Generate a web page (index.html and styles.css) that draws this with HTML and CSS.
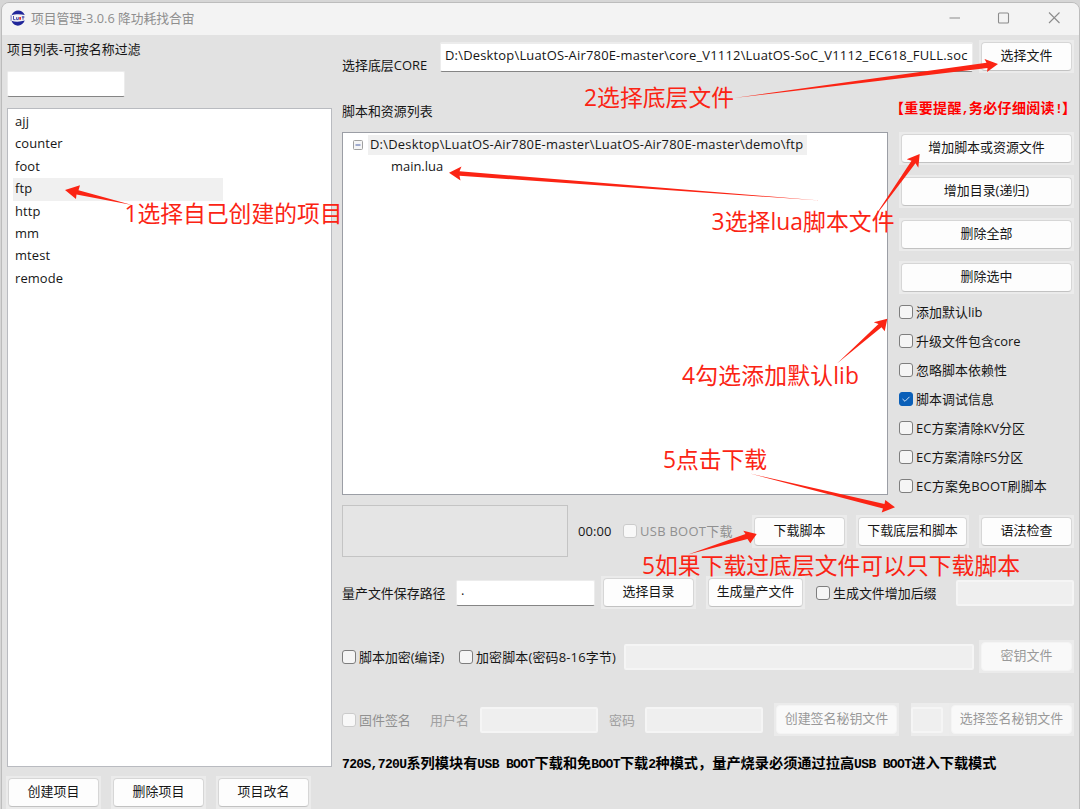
FILE: index.html
```html
<!DOCTYPE html>
<html lang="zh-CN">
<head>
<meta charset="utf-8">
<title>项目管理</title>
<link rel="stylesheet" href="styles.css">
</head>
<body>
<div class="window">
  <header class="titlebar">
    <svg class="logo" width="16" height="16" viewBox="0 0 16 16">
      <path d="M1.500 5.200C4 -1 12 -1 14.800 5C10 4 5 4.200 1.500 5.200Z" fill="#20269a"/>
      <path d="M1.500 10.800C4 17.400 12 17.200 14.800 10.600C10 12 5 12 1.500 10.800Z" fill="#20269a"/>
      <path d="M0.500 5L1.800 5.500V10.500L0.500 11Z" fill="#8d91cc"/>
      <path d="M3.500 6V9.600H5.500M6.600 7.200V9.600H8.300V7.200M13 6V9.700M11.800 7H14.500" fill="none" stroke="#20269a" stroke-width=".8"/>
      <path d="M9.200 7h1.800v2.700h-1.800z" fill="#e8322c"/>
    </svg>
    <span class="title">项目管理-3.0.6 降功耗找合宙</span>
    <svg class="controls" width="112" height="14" viewBox="0 0 112 14" fill="none" stroke="#8c8c8c" stroke-width="1.100">
      <path d="M.5 7H11"/>
      <rect x="49.500" y="2" width="10" height="10" rx="1"/>
      <path d="M100 1.500L110.500 12M110.500 1.500L100 12"/>
    </svg>
  </header>
  <div class="content">
    <aside class="projects">
      <div class="label filter-label">项目列表-可按名称过滤</div>
      <div class="field filter"></div>
      <ul class="list">
        <li>ajj</li><li>counter</li><li>foot</li><li class="selected">ftp</li>
        <li>http</li><li>mm</li><li>mtest</li><li>remode</li>
      </ul>
      <div class="project-actions">
        <button class="btn"><span>创建项目</span></button>
        <button class="btn"><span>删除项目</span></button>
        <button class="btn"><span>项目改名</span></button>
      </div>
    </aside>
    <main class="main">
      <div class="row core-row">
        <span class="label core-label">选择底层CORE</span>
        <div class="field core-path"><span class="path">D:\Desktop\LuatOS-Air780E-master\core_V1112\LuatOS-SoC_V1112_EC618_FULL.soc</span></div>
        <button class="btn end"><span>选择文件</span></button>
      </div>
      <div class="row heading-row">
        <span class="label">脚本和资源列表</span>
        <span class="warning">【重要提醒<i>,</i>务必仔细阅读<i>!</i>】</span>
      </div>
      <div class="resources">
        <div class="tree">
          <div class="node"><svg width="10" height="10" viewBox="0 0 10 10"><rect x=".5" y=".5" width="9" height="9" rx="1" fill="#f5f5f5" stroke="#a0a0a0"/><path d="M2.500 5h5" stroke="#4a60a8"/></svg><span class="root-name">D:\Desktop\LuatOS-Air780E-master\LuatOS-Air780E-master\demo\ftp</span></div>
          <div class="leaf">main.lua</div>
        </div>
        <div class="side">
          <button class="btn wide"><span>增加脚本或资源文件</span></button>
          <button class="btn wide"><span>增加目录(递归)</span></button>
          <button class="btn wide"><span>删除全部</span></button>
          <button class="btn wide"><span>删除选中</span></button>
          <div class="options">
            <label class="check"><i class="box"></i>添加默认lib</label>
            <label class="check"><i class="box"></i>升级文件包含core</label>
            <label class="check"><i class="box"></i>忽略脚本依赖性</label>
            <label class="check"><i class="box on"><svg width="12" height="12" viewBox="0 0 12 12"><path d="M2.500 6L5 8.300L9.500 3.800" fill="none" stroke="#cfe2f5"/></svg></i>脚本调试信息</label>
            <label class="check"><i class="box"></i>EC方案清除KV分区</label>
            <label class="check"><i class="box"></i>EC方案清除FS分区</label>
            <label class="check boot-free"><i class="box"></i>EC方案免BOOT刷脚本</label>
          </div>
        </div>
      </div>
      <div class="row download-row">
        <div class="progress"></div>
        <span class="timer">00:00</span>
        <label class="check disabled usb"><i class="box"></i>USB BOOT下载</label>
        <button class="btn dl-script"><span>下载脚本</span></button>
        <button class="btn dl-all"><span>下载底层和脚本</span></button>
        <button class="btn end"><span>语法检查</span></button>
      </div>
      <div class="row output-row">
        <span class="label output-label">量产文件保存路径</span>
        <div class="field output-path">.</div>
        <button class="btn pick-dir"><span>选择目录</span></button>
        <button class="btn generate"><span>生成量产文件</span></button>
        <label class="check suffix"><i class="box"></i>生成文件增加后缀</label>
        <div class="field off end suffix-field"></div>
      </div>
      <div class="row encrypt-row">
        <label class="check compile"><i class="box"></i>脚本加密(编译)</label>
        <label class="check password"><i class="box"></i>加密脚本(密码8-16字节)</label>
        <div class="field off password-field"></div>
        <button class="btn off end"><span>密钥文件</span></button>
      </div>
      <div class="row sign-row">
        <label class="check disabled sign"><i class="box"></i>固件签名</label>
        <span class="label muted user-label">用户名</span>
        <div class="field off cred"></div>
        <span class="label muted pass-label">密码</span>
        <div class="field off cred"></div>
        <button class="btn off create-key"><span>创建签名秘钥文件</span></button>
        <div class="key-group end">
          <div class="field off key-field"></div>
          <button class="btn off pick-key"><span>选择签名秘钥文件</span></button>
        </div>
      </div>
      <p class="note"><i>720S,720U</i>系列模块有<i>USB BOOT</i>下载和免<i>BOOT</i>下载<i>2</i>种模式，量产烧录必须通过拉高<i>USB BOOT</i>进入下载模式</p>
    </main>
  </div>
</div>
<svg class="annotations" width="1080" height="809" viewBox="0 0 1080 809">
  <path d="M65 190L80 185.200L78.500 190.300L132 205L76.500 194.500L76 199Z"/>
  <path d="M998 64L984.500 59L986.500 62.700L734 98L987.500 68L987 72Z"/>
  <path d="M449 172.700L461.500 166.500L459.500 171.300L820 200.500L459.500 175.800L460.500 180.500Z"/>
  <path d="M919.700 154L906.700 159.300L911.500 160.800L872 220.500L915.500 163.300L918.300 167.700Z"/>
  <path d="M887.300 318.700L873.700 322.300L878.500 324L837 363.500L881.500 327.300L884.700 331.300Z"/>
  <path d="M895 507.300L885.300 500L884.500 504L750 473.500L883 508.500L881.700 512.500Z"/>
  <path d="M756.700 534L743.300 530.700L745.500 534L688 554.500L747.500 539L750.300 543.300Z"/>
  <text x="124.500" y="221.500" textLength="218">1选择自己创建的项目</text>
  <text x="584" y="105.500" textLength="150">2选择底层文件</text>
  <text x="711.500" y="229.500" textLength="183">3选择lua脚本文件</text>
  <text x="682" y="383.500" textLength="177">4勾选添加默认lib</text>
  <text x="663" y="467.500" textLength="104">5点击下载</text>
  <text x="642" y="573.500" textLength="378">5如果下载过底层文件可以只下载脚本</text>
</svg>
</body>
</html>
```
FILE: styles.css
```css
* { box-sizing: border-box; }
body {
  margin: 0;
  width: 1080px;
  height: 809px;
  overflow: hidden;
  background: #d6d6d6;
  color: #161616;
  font: 12.95px/18px "Open Sans", "Noto Sans CJK SC", sans-serif;
  white-space: nowrap;
}
i { font-style: normal; }
.window {
  margin: 2px 0 0 1px;
  width: 1079px;
  height: 820px;
  border: 1px solid #bcbcbc;
  border-radius: 8px 8px 0 0;
  background: #e2e2e2;
  overflow: hidden;
}
.titlebar {
  display: flex;
  align-items: center;
  height: 32px;
  padding: 0 18px 2px 8px;
  background: #f3f3f3;
  color: #8e8e8e;
}
.title { margin-left: 5px; font-size: 12.75px; }
.controls { margin-left: auto; }
.content { display: flex; padding-left: 5px; }
.projects { width: 325px; padding-top: 5px; }
.label { display: block; }
.filter-label { height: 31px; }
.field {
  height: 26px;
  border: 1px solid #ececec;
  border-bottom: 1px solid #858585;
  border-radius: 2px;
  background: #fff;
}
.field.off { background: #efefef; border: 2px solid #f5f5f5; }
.filter { width: 118px; }
.list {
  list-style: none;
  margin: 11px 0 0;
  padding: 2px 5px;
  height: 659px;
  border: 1px solid #b9bbc0;
  background: #fff;
}
.list li { width: 210px; height: 22.4px; padding-left: 2px; line-height: 20px; letter-spacing: .1px; }
.selected { background: #f0f0f0; }
.project-actions { display: flex; gap: 10px; margin-top: 9px; margin-left: -1px; }
.btn {
  flex: none;
  display: block;
  width: 95px;
  height: 33px;
  padding: 2px;
  border: 0;
  background: #ebebeb;
  font: inherit;
  color: inherit;
}
.btn span {
  display: block;
  height: 29px;
  line-height: 25px;
  border: 1px solid #d6d6d6;
  border-bottom-color: #c2c2c2;
  border-radius: 4px;
  background: #fdfdfd;
}
.btn.off span { color: #999; background: #f9f9f9; border-color: #f4f4f4; }
.main { width: 732px; margin-left: 10px; padding-top: 5px; }
.row { display: flex; align-items: center; }
.end { margin-left: auto; }
.core-row { height: 33px; }
.core-label { width: 98px; padding-top: 17px; }
.core-path { width: 533px; height: 30px; padding: 2px 4px; border-width: 2px 1px 1px; letter-spacing: .2px; }
.heading-row { margin-top: 27px; height: 20px; justify-content: space-between; padding-top: 2px; }
.warning, .note {
  font-family: "Noto Sans CJK SC", sans-serif;
  font-weight: 700;
}
.warning { font-size: 14px; color: #f00; width: 184px; margin-top: -5px; letter-spacing: .35px; }
.warning i, .note i { font-family: "Liberation Mono", monospace; font-size: 13px; letter-spacing: -0.7px; }
.resources { display: flex; margin-top: 12px; height: 363px; }
.tree { width: 546px; border: 1px solid #9b9ea5; background: #fff; padding: 2px 10px; }
.node { display: flex; align-items: center; height: 20px; }
.root-name { margin-left: 5px; height: 20px; line-height: 18px; width: 439px; padding-left: 2px; background: #f0f0f0; letter-spacing: .22px; }
.leaf { padding-left: 38px; height: 22px; line-height: 22px; }
.side { width: 186px; padding-left: 11px; }
.wide { width: 175px; margin-bottom: 10px; }
.options { margin-top: -6px; }
.options .check { height: 28.9px; letter-spacing: .05px; }
.options .boot-free { letter-spacing: .2px; }
.check { display: flex; align-items: center; }
.box {
  flex: none;
  display: block;
  width: 14px;
  height: 14px;
  margin-right: 3px;
  border: 1px solid #7e7e7e;
  border-radius: 3px;
  background: #f5f5f5;
}
.box.on { background: #0a5fb8; border-color: #0a5fb8; }
.box svg { display: block; }
.disabled { color: #909090; }
.disabled .box { border-color: #cbcbcb; background: #f8f8f8; }
.muted { color: #a0a0a0; }
.download-row { margin-top: 10px; height: 52px; }
.progress { width: 226px; height: 52px; border: 1px solid #c4c4c4; background: #e5e5e5; }
.timer { width: 55px; padding-left: 10px; letter-spacing: .1px; }
.usb { width: 129px; letter-spacing: .3px; }
.dl-script { width: 95px; }
.dl-all { width: 113px; margin-left: 9px; }
.output-row { margin-top: 18px; height: 35px; }
.output-label { width: 114px; }
.output-path { width: 139px; padding-left: 4px; }
.pick-dir { margin-left: 6px; }
.generate { width: 99px; margin-left: 10px; }
.suffix { margin-left: 11px; padding-top: 1px; }
.suffix-field { width: 118px; }
.encrypt-row { margin-top: 31px; height: 31px; }
.compile { width: 117px; }
.password { width: 156px; letter-spacing: .18px; }
.password-field { width: 350px; margin-left: 9px; }
.sign-row { margin-top: 32px; height: 31px; }
.sign { width: 88px; }
.user-label { width: 50px; }
.cred { width: 118px; }
.pass-label { width: 47px; padding-left: 11px; }
.create-key { width: 125px; margin-left: 11px; }
.key-group { display: flex; align-items: center; background: #ececec; }
.key-field { width: 32px; margin-right: 6px; }
.pick-key { width: 125px; }
.note { margin: 17px 0 0; font-size: 14.2px; line-height: 20px; color: #000; }
.note i { letter-spacing: -0.65px; }
.annotations {
  position: absolute;
  left: 0;
  top: 0;
  fill: #fb2414;
  font: 22.8px "Open Sans", "Noto Sans CJK SC", sans-serif;
}
```
